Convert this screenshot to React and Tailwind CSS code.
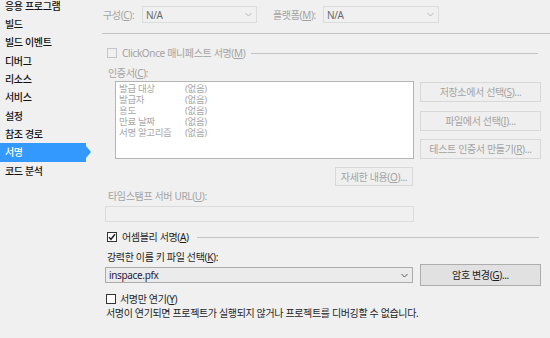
import React from "react"

const navItems = ["응용 프로그램", "빌드", "빌드 이벤트", "디버그", "리소스", "서비스", "설정", "참조 경로", "서명", "코드 분석"]

function Chevron({ color = "#a8a8a8" }) {
  return (
    <svg width="7" height="5" viewBox="0 0 7 5" className="shrink-0">
      <path d="M0.5 1 L3.5 4 L6.5 1" fill="none" stroke={color} strokeWidth="1" />
    </svg>
  )
}

function DisabledSelect({ className }) {
  return (
    <div className={`h-[17px] border border-[#dcdcdc] bg-[#f0f0f0] flex items-center justify-between pl-[3px] pr-[4px] ${className}`}>
      <span className="text-[#6a6a6a]">N/A</span>
      <Chevron color="#b8b8b8" />
    </div>
  )
}

function DisabledButton({ className, children }) {
  return (
    <div className={`border border-[#d8d8d8] bg-[#efefef] flex items-center justify-center whitespace-nowrap text-[#a3a3a3] ${className}`}>
      {children}
    </div>
  )
}

export default function App() {
  return (
    <div className="w-[550px] h-[338px] bg-[#f0f0f0] flex overflow-hidden text-[10px] tracking-[-0.35px] leading-[12px] text-[#1e1e1e] font-['Noto_Sans','Noto_Sans_CJK_KR',sans-serif]">
      {/* Sidebar */}
      <nav className="w-[86px] shrink-0 flex flex-col mt-[-3.5px]">
        {navItems.map((item) => (
          <div
            key={item}
            className={`relative h-[18.35px] shrink-0 flex items-center pl-[5px] whitespace-nowrap font-medium ${item === "서명" ? "bg-[#3399ff] text-white" : "text-[#111]"}`}
          >
            {item}
            {item === "서명" && (
              <div className="absolute right-[-5px] top-1/2 -translate-y-1/2 w-0 h-0 border-y-[6px] border-y-transparent border-l-[5px] border-l-[#3399ff]" />
            )}
          </div>
        ))}
      </nav>

      {/* Main */}
      <main className="flex-1 flex flex-col">
        {/* Configuration / platform */}
        <div className="flex items-center mt-[6px] ml-[17px]">
          <span className="w-[39px] text-[#a3a3a3] whitespace-nowrap">구성(<u>C</u>):</span>
          <DisabledSelect className="w-[115px]" />
          <span className="w-[50px] ml-[16px] text-[#a3a3a3] whitespace-nowrap">플랫폼(<u>M</u>):</span>
          <DisabledSelect className="w-[116px]" />
        </div>

        <div className="h-px bg-[#c4c4c4] mt-[10px] ml-[16px]" />

        {/* ClickOnce */}
        <div className="flex items-center mt-[13px] ml-[21px] mr-[12px] h-[12px]">
          <div className="w-[10px] h-[10px] border border-[#c6c6c6] bg-[#f0f0f0] shrink-0" />
          <span className="ml-[5px] text-[#a3a3a3] whitespace-nowrap">ClickOnce 매니페스트 서명(<u>M</u>)</span>
          <div className="flex-1 h-px bg-[#c4c4c4] ml-[6px]" />
        </div>

        <div className="mt-[8px] ml-[22px] text-[#a3a3a3]">인증서(<u>C</u>):</div>

        {/* Certificate */}
        <div className="flex mt-[2px]">
          <div className="ml-[29px] w-[299px] h-[78px] border border-[#b4b4b4] bg-white pt-[1px] pl-[3px] text-[9.5px] text-[#a8a8a8] leading-[11px]">
            {["발급 대상", "발급자", "용도", "만료 날짜", "서명 알고리즘"].map((k) => (
              <div key={k} className="flex h-[11px] items-center">
                <span className="w-[66px] whitespace-nowrap">{k}</span>
                <span>(없음)</span>
              </div>
            ))}
          </div>
          <div className="ml-[6px] mt-[1px] flex flex-col">
            <DisabledButton className="w-[121px] h-[20px]">저장소에서 선택(<u>S</u>)...</DisabledButton>
            <DisabledButton className="w-[121px] h-[20px] mt-[9px]">파일에서 선택(<u>I</u>)...</DisabledButton>
            <DisabledButton className="w-[121px] h-[20px] mt-[8px]">테스트 인증서 만들기(<u>R</u>)...</DisabledButton>
          </div>
        </div>

        <div className="flex mt-[8px] ml-[249px]">
          <DisabledButton className="w-[78px] h-[19px]">자세한 내용(<u>O</u>)...</DisabledButton>
        </div>

        <div className="mt-[4px] ml-[22px] text-[#a3a3a3]">타임스탬프 서버 URL(<u>U</u>):</div>
        <div className="mt-[4px] ml-[19px] w-[309px] h-[16px] border border-[#dcdcdc] bg-[#f0f0f0]" />

        {/* Assembly signing */}
        <div className="flex items-center mt-[9px] ml-[21px] mr-[11px] h-[12px]">
          <div className="w-[10px] h-[10px] border border-[#333] bg-white shrink-0 flex items-center justify-center">
            <svg width="8" height="8" viewBox="0 0 8 8">
              <path d="M1 4.2 L3 6.3 L7 1.3" fill="none" stroke="#222" strokeWidth="1.5" />
            </svg>
          </div>
          <span className="ml-[5px] whitespace-nowrap">어셈블리 서명(<u>A</u>)</span>
          <div className="flex-1 h-px bg-[#c4c4c4] ml-[8px]" />
        </div>

        <div className="mt-[8px] ml-[21px]">강력한 이름 키 파일 선택(<u>K</u>):</div>

        <div className="flex items-center mt-[1px] h-[22px]">
          <div className="ml-[19px] w-[308px] h-[16px] border border-[#acacac] bg-[#ebebeb] flex items-center justify-between pl-[3px] pr-[4px]">
            <span className="text-[#2a1a3a]">inspace.pfx</span>
            <Chevron color="#555" />
          </div>
          <div className="ml-[7px] w-[121px] h-[22px] border border-[#adadad] bg-[#e1e1e1] flex items-center justify-center">
            암호 변경(<u>G</u>)...
          </div>
        </div>

        {/* Delay sign */}
        <div className="flex items-center mt-[7px] ml-[20px] h-[12px]">
          <div className="w-[10px] h-[10px] border border-[#333] bg-white shrink-0" />
          <span className="ml-[4px]">서명만 연기(<u>Y</u>)</span>
        </div>

        <div className="mt-[2px] ml-[20px] whitespace-nowrap">
          서명이 연기되면 프로젝트가 실행되지 않거나 프로젝트를 디버깅할 수 없습니다.
        </div>
      </main>
    </div>
  )
}
